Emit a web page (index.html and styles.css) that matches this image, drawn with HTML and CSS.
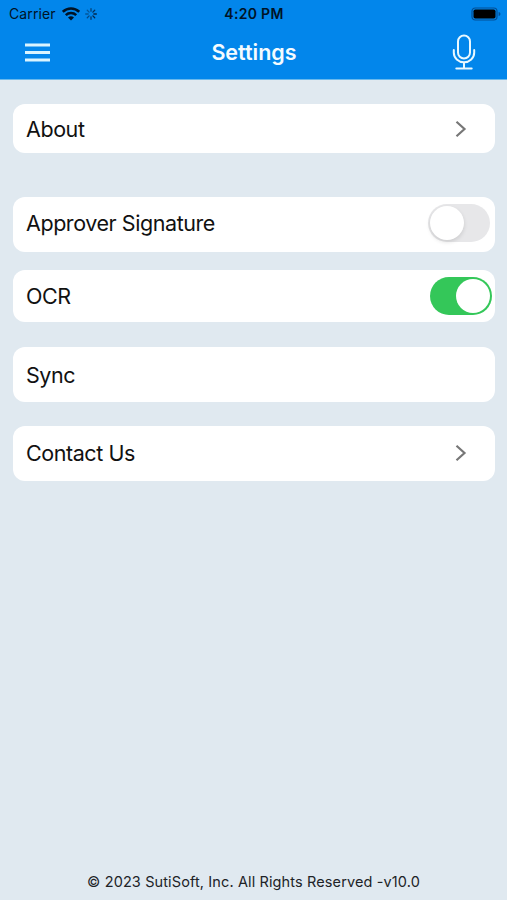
FILE: index.html
```html
<!DOCTYPE html>
<html lang="en">
<head>
<meta charset="utf-8">
<title>Settings</title>
<link rel="stylesheet" href="styles.css">
</head>
<body>
<header class="top">
  <div class="status">
    <div class="status-left">
      <span class="carrier">Carrier</span>
      <svg class="wifi" width="18" height="14" viewBox="0 0 18 14" fill="none" stroke="#001326" stroke-width="2.5"><path d="M.8 4.800a11.700 11.700 0 0 1 16.400 0M3.800 8.100a7.400 7.400 0 0 1 10.400 0"/><path d="M9 13.600 6 10.600a4.300 4.300 0 0 1 6 0z" fill="#001326" stroke="none"/></svg>
      <svg class="spinner" width="12" height="12" viewBox="0 0 12 12" stroke="#05284c" stroke-width="1.3" stroke-linecap="round"><path d="M6 .7v2.500" opacity=".7"/><path d="m9.700 2.300-1.800 1.800" opacity=".9"/><path d="M11.400 6H8.800M9.700 9.700 7.900 7.900"/><path d="M6 11.300V8.800" opacity=".8"/><path d="m2.300 9.700 1.800-1.800" opacity=".65"/><path d="M.7 6h2.500" opacity=".5"/><path d="m2.300 2.300 1.800 1.800" opacity=".5"/></svg>
    </div>
    <span class="time">4:20 PM</span>
    <svg class="battery" width="30" height="14" viewBox="0 0 30 14"><rect x="1" y="1" width="25" height="12" rx="3.200" fill="none" stroke="#034f96" stroke-width="1.200"/><rect x="2.500" y="2.500" width="22" height="9" rx="1.800" fill="#000"/><path d="M27.600 5v4c1.200-.4 1.800-1.100 1.800-2s-.6-1.600-1.800-2z" fill="#034f96"/></svg>
  </div>
  <nav class="bar">
    <svg width="25" height="19" viewBox="0 0 25 19" stroke="#d9f4ff" stroke-width="3"><path d="M0 2h25M0 9.500h25M0 17h25"/></svg>
    <h1 class="title">Settings</h1>
    <svg width="24" height="36" viewBox="0 0 24 36" fill="none" stroke="#e9f8ff" stroke-width="2" stroke-linecap="round"><rect x="6" y="1.500" width="12" height="23" rx="6"/><path d="M1.800 16v2.700a10.200 9.500 0 0 0 20.400 0V16M12 28.500v5.500M4.300 34.500h15.400"/></svg>
  </nav>
</header>
<main class="list">
  <div class="card about"><span>About</span><svg class="chevron" width="12" height="18" viewBox="0 0 12 18"><path d="m1.500 1.700 8 7.300-8 7.300"/></svg></div>
  <div class="card signature"><span>Approver Signature</span><span class="switch"></span></div>
  <div class="card ocr"><span>OCR</span><span class="switch on"></span></div>
  <div class="card sync"><span>Sync</span></div>
  <div class="card contact"><span>Contact Us</span><svg class="chevron" width="12" height="18" viewBox="0 0 12 18"><path d="m1.500 1.700 8 7.300-8 7.300"/></svg></div>
</main>
<footer class="footer"><span>© 2023 SutiSoft, Inc. All Rights Reserved -v10.0</span></footer>
</body>
</html>
```
FILE: styles.css
```css
* { box-sizing: border-box; }
body {
  margin: 0;
  height: 900px;
  display: flex;
  flex-direction: column;
  background: #e0e9f0;
  color: #111;
  font-family: Inter, "Liberation Sans", sans-serif;
  overflow: hidden;
}
svg { display: block; flex: none; }
.top {
  height: 80px;
  background: #0286eb;
  border-bottom: 1px solid #69b9ed;
}
.status {
  display: grid;
  grid-template-columns: 1fr auto 1fr;
  align-items: center;
  height: 27px;
  padding: 0 8px 0 9px;
  color: #001326;
}
.status-left { display: flex; align-items: center; }
.carrier { font-size: 14px; line-height: 18px; letter-spacing: 0.1px; }
.wifi { margin-left: 6px; }
.spinner { margin-left: 5px; }
.time { font-size: 14px; font-weight: 600; line-height: 18px; letter-spacing: 0.3px; }
.battery { justify-self: end; margin-right: -2px; }
.bar {
  display: grid;
  grid-template-columns: 25px 1fr 24px;
  align-items: center;
  height: 50px;
  padding: 0 31px 0 25px;
}
.title {
  margin: 0;
  padding-left: 6px;
  text-align: center;
  color: #f4fbff;
  font-size: 21.500px;
  font-weight: 600;
  line-height: 28px;
}
.list { padding: 23.500px 12px 0 13px; }
.card {
  display: flex;
  align-items: center;
  justify-content: space-between;
  height: 55px;
  padding-left: 13px;
  border-radius: 12px;
  background: #fff;
  font-size: 21.500px;
  letter-spacing: -0.430px;
  line-height: 28px;
}
.about { height: 49px; padding-top: 2px; }
.signature { margin-top: 44px; padding-right: 5px; padding-bottom: 2px; }
.ocr { height: 52px; margin-top: 18px; padding-right: 3px; }
.sync { margin-top: 25.500px; padding-top: 1px; }
.contact { margin-top: 24px; padding-bottom: 1px; }
.chevron {
  margin-right: 28px;
  fill: none;
  stroke: #777;
  stroke-width: 2.200;
}
.switch {
  display: flex;
  width: 62px;
  height: 38px;
  padding: 2px;
  border-radius: 19px;
  background: #e7e7e9;
}
.switch::before {
  content: "";
  width: 34px;
  height: 34px;
  border-radius: 50%;
  background: #fff;
  box-shadow: 0 2px 4px rgba(0, 0, 0, 0.12);
}
.on { justify-content: flex-end; background: #34c759; }
.on::before { box-shadow: none; }
.footer {
  margin-top: auto;
  padding-bottom: 8px;
  text-align: center;
  color: #202327;
  font-size: 14.500px;
  letter-spacing: 0.120px;
  line-height: 20px;
}
```
